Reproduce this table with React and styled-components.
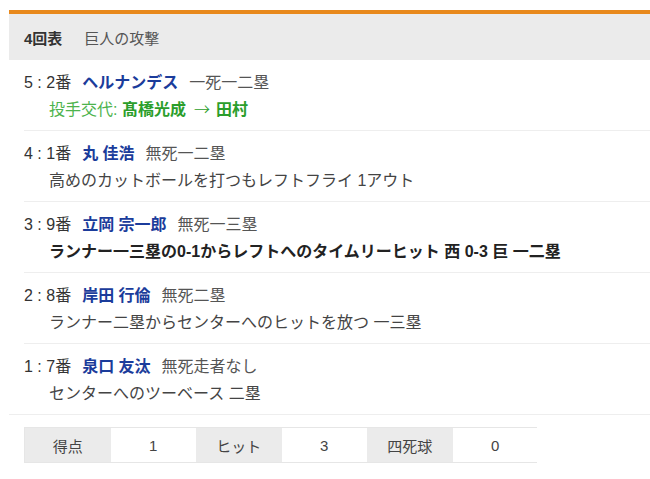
import React from "react";
import styled, { createGlobalStyle } from "styled-components";

const Global = createGlobalStyle`
  html, body { margin: 0; padding: 0; background: #fff; }
  body {
    font-family: "Liberation Sans", "Noto Sans CJK JP", sans-serif;
    color: #333;
  }
`;

const Page = styled.div`
  padding: 10px 0 0 9px;
`;

const Header = styled.div`
  border-top: 4px solid #e8891c;
  background: #ebebeb;
  height: 46px;
  display: flex;
  align-items: center;
  padding-left: 15px;
  font-size: 15px;
`;

const Inning = styled.span`
  font-weight: bold;
  color: #333;
  margin-right: 22px;
`;

const Team = styled.span`
  color: #555;
`;

const List = styled.ul`
  list-style: none;
  margin: 0;
  padding: 0;
  border-bottom: 1px solid #eeeeee;
`;

const Item = styled.li`
  margin-left: 15px;
  padding: 9px 0 7px;
  font-size: 16px;
  line-height: 27px;
  border-bottom: ${(p) => (p.$last ? "none" : "1px solid #eeeeee")};
`;

const Line = styled.div`
  display: flex;
  align-items: baseline;
  white-space: nowrap;
  height: 27px;
  padding-left: ${(p) => (p.$indent ? "25px" : "0")};
`;

const Order = styled.span`
  color: #333;
`;

const Name = styled.span`
  color: #1b3c9b;
  font-weight: bold;
  margin-left: 11px;
`;

const Status = styled.span`
  color: #555;
  margin-left: 11px;
`;

const Desc = styled.span`
  color: ${(p) => (p.$bold ? "#222" : "#444")};
  font-weight: ${(p) => (p.$bold ? "bold" : "normal")};
`;

const Change = styled.span`
  color: #4db34d;
`;

const ChangeName = styled.span`
  color: #2b9e2b;
  font-weight: bold;
`;

const Arrow = styled.span`
  font-family: "Noto Sans CJK JP", sans-serif;
  font-weight: 300;
  line-height: 1;
  color: #2b9e2b;
  margin: 0 6px 0 8px;
`;

const Stats = styled.div`
  margin: 12px 0 0 15px;
  display: grid;
  grid-template-columns: repeat(6, 85.5px);
  width: 513px;
  border: 1px solid #e6e6e6;
  box-sizing: border-box;
`;

const Cell = styled.div`
  height: 34px;
  display: flex;
  align-items: center;
  justify-content: center;
  font-size: 15px;
  color: #444;
  background: ${(p) => (p.$label ? "#ebebeb" : "#fff")};
`;

const plays = [
  {
    order: "5 : 2番",
    name: "ヘルナンデス",
    status: "一死一二塁",
    change: { from: "髙橋光成", to: "田村" },
  },
  {
    order: "4 : 1番",
    name: "丸 佳浩",
    status: "無死一二塁",
    desc: "高めのカットボールを打つもレフトフライ 1アウト",
  },
  {
    order: "3 : 9番",
    name: "立岡 宗一郎",
    status: "無死一三塁",
    desc: "ランナー一三塁の0-1からレフトへのタイムリーヒット 西 0-3 巨 一二塁",
    bold: true,
  },
  {
    order: "2 : 8番",
    name: "岸田 行倫",
    status: "無死二塁",
    desc: "ランナー二塁からセンターへのヒットを放つ 一三塁",
  },
  {
    order: "1 : 7番",
    name: "泉口 友汰",
    status: "無死走者なし",
    desc: "センターへのツーベース 二塁",
  },
];

const stats = [
  ["得点", "1"],
  ["ヒット", "3"],
  ["四死球", "0"],
];

export default function App() {
  return (
    <Page>
      <Global />
      <Header>
        <Inning>4回表</Inning>
        <Team>巨人の攻撃</Team>
      </Header>
      <List>
        {plays.map((p, i) => (
          <Item key={i} $last={i === plays.length - 1}>
            <Line>
              <Order>{p.order}</Order>
              <Name>{p.name}</Name>
              <Status>{p.status}</Status>
            </Line>
            <Line $indent>
              {p.change ? (
                <>
                  <Change>投手交代:&nbsp;</Change>
                  <ChangeName>{p.change.from}</ChangeName>
                  <Arrow>→</Arrow>
                  <ChangeName>{p.change.to}</ChangeName>
                </>
              ) : (
                <Desc $bold={p.bold}>{p.desc}</Desc>
              )}
            </Line>
          </Item>
        ))}
      </List>
      <Stats>
        {stats.map(([k, v]) => (
          <React.Fragment key={k}>
            <Cell $label>{k}</Cell>
            <Cell>{v}</Cell>
          </React.Fragment>
        ))}
      </Stats>
    </Page>
  );
}
